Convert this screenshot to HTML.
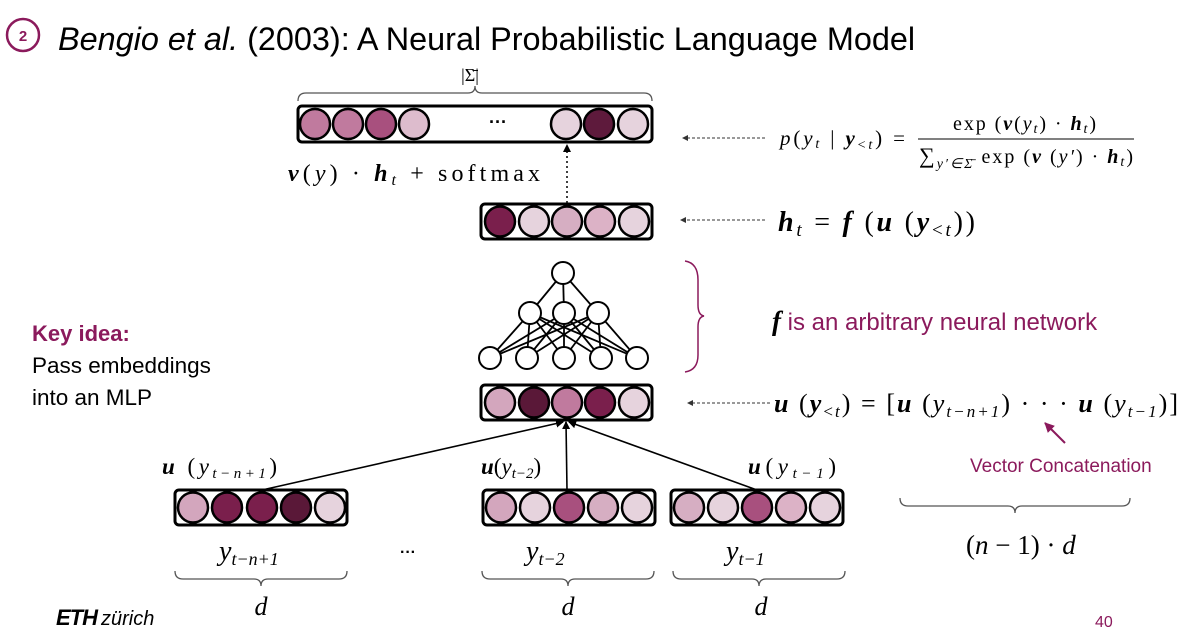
<!DOCTYPE html>
<html><head><meta charset="utf-8"><style>
html,body{margin:0;padding:0;background:#fff;}
svg{display:block;}
.s{font-family:"Liberation Sans",sans-serif;}
.m{font-family:"Liberation Serif",serif;font-style:italic;}
.r{font-family:"Liberation Serif",serif;}
.b{font-family:"Liberation Serif",serif;font-style:italic;font-weight:bold;}
</style></head><body>
<svg width="1182" height="637" viewBox="0 0 1182 637" xmlns="http://www.w3.org/2000/svg">
<defs>
<marker id="ar" markerWidth="8" markerHeight="8" refX="7" refY="4" orient="auto" markerUnits="userSpaceOnUse"><path d="M0,0 L8,4 L0,8 z" fill="#000"/></marker>
<marker id="ar2" markerWidth="6" markerHeight="6" refX="5" refY="3" orient="auto" markerUnits="userSpaceOnUse"><path d="M0,0 L6,3 L0,6 z" fill="#333"/></marker>
<marker id="ar3" markerWidth="10" markerHeight="10" refX="9" refY="5" orient="auto" markerUnits="userSpaceOnUse"><path d="M0,0 L10,5 L0,10 z" fill="#8b1a5c"/></marker>
</defs>
<circle cx="23" cy="35" r="16" fill="none" stroke="#8b1a5c" stroke-width="2.5"/>
<text x="23" y="41" class="s" font-size="15" font-weight="bold" fill="#8b1a5c" text-anchor="middle">2</text>
<text x="58" y="50" class="s" font-size="32.4" fill="#000"><tspan font-style="italic">Bengio et al.</tspan> (2003): A Neural Probabilistic Language Model</text>

<text x="470" y="81" class="r" font-size="18" text-anchor="middle">|Σ̄|</text>
<path d="M298,101 Q298,93 306,93 L468,93 Q475,93 475,86 Q475,93 482,93 L644,93 Q652,93 652,101" fill="none" stroke="#555" stroke-width="1.3"/>

<rect x="298" y="106" width="354" height="36" rx="4" fill="#fff" stroke="#000" stroke-width="3"/>
<g stroke="#000" stroke-width="2.5">
<circle cx="315" cy="124" r="15" fill="#c07a9e"/>
<circle cx="348" cy="124" r="15" fill="#c07a9e"/>
<circle cx="381" cy="124" r="15" fill="#a8507e"/>
<circle cx="414" cy="124" r="15" fill="#ddbccd"/>
<circle cx="566" cy="124" r="15" fill="#e6d3dd"/>
<circle cx="599" cy="124" r="15" fill="#5e1a3c"/>
<circle cx="633" cy="124" r="15" fill="#e6d3dd"/>
</g>
<text x="498" y="128" class="s" font-size="18" font-weight="bold" text-anchor="middle">···</text>

<text x="288" y="181" font-size="24" textLength="252" lengthAdjust="spacing"><tspan class="b">v</tspan><tspan class="r">(</tspan><tspan class="m">y</tspan><tspan class="r">) · </tspan><tspan class="b">h</tspan><tspan class="m" font-size="16" dy="4">t</tspan><tspan class="r" dy="-4">    +    softmax</tspan></text>

<line x1="567" y1="203" x2="567" y2="145" stroke="#000" stroke-width="1.5" stroke-dasharray="2,3" marker-end="url(#ar)"/>

<rect x="481" y="204" width="171" height="35" rx="4" fill="#fff" stroke="#000" stroke-width="3"/>
<g stroke="#000" stroke-width="2.5">
<circle cx="500" cy="221.5" r="15" fill="#7a1f4c"/>
<circle cx="534" cy="221.5" r="15" fill="#e6d3dd"/>
<circle cx="567" cy="221.5" r="15" fill="#d6aec2"/>
<circle cx="600" cy="221.5" r="15" fill="#dcb2c6"/>
<circle cx="634" cy="221.5" r="15" fill="#e6d3dd"/>
</g>

<g stroke="#000" stroke-width="1.8" fill="none">
<line x1="563" y1="273" x2="530" y2="313"/><line x1="563" y1="273" x2="564" y2="313"/><line x1="563" y1="273" x2="598" y2="313"/>
<line x1="530" y1="313" x2="490" y2="358"/><line x1="530" y1="313" x2="527" y2="358"/><line x1="530" y1="313" x2="564" y2="358"/><line x1="530" y1="313" x2="601" y2="358"/><line x1="530" y1="313" x2="637" y2="358"/>
<line x1="564" y1="313" x2="490" y2="358"/><line x1="564" y1="313" x2="527" y2="358"/><line x1="564" y1="313" x2="564" y2="358"/><line x1="564" y1="313" x2="601" y2="358"/><line x1="564" y1="313" x2="637" y2="358"/>
<line x1="598" y1="313" x2="490" y2="358"/><line x1="598" y1="313" x2="527" y2="358"/><line x1="598" y1="313" x2="564" y2="358"/><line x1="598" y1="313" x2="601" y2="358"/><line x1="598" y1="313" x2="637" y2="358"/>
</g>
<g stroke="#000" stroke-width="2" fill="#fff">
<circle cx="563" cy="273" r="11"/>
<circle cx="530" cy="313" r="11"/><circle cx="564" cy="313" r="11"/><circle cx="598" cy="313" r="11"/>
<circle cx="490" cy="358" r="11"/><circle cx="527" cy="358" r="11"/><circle cx="564" cy="358" r="11"/><circle cx="601" cy="358" r="11"/><circle cx="637" cy="358" r="11"/>
</g>

<rect x="481" y="385" width="171" height="35" rx="4" fill="#fff" stroke="#000" stroke-width="3"/>
<g stroke="#000" stroke-width="2.5">
<circle cx="500" cy="402.5" r="15" fill="#d3a6bd"/>
<circle cx="534" cy="402.5" r="15" fill="#5a1838"/>
<circle cx="567" cy="402.5" r="15" fill="#c07a9e"/>
<circle cx="600" cy="402.5" r="15" fill="#7a1f4c"/>
<circle cx="634" cy="402.5" r="15" fill="#e6d3dd"/>
</g>

<g stroke="#000" stroke-width="1.6">
<line x1="262" y1="490" x2="563" y2="422" marker-end="url(#ar)"/>
<line x1="567" y1="490" x2="566" y2="422" marker-end="url(#ar)"/>
<line x1="757" y1="490" x2="569" y2="422" marker-end="url(#ar)"/>
</g>

<rect x="175" y="490" width="172" height="35" rx="4" fill="#fff" stroke="#000" stroke-width="3"/>
<g stroke="#000" stroke-width="2.5">
<circle cx="193" cy="507.5" r="15" fill="#d3a6bd"/>
<circle cx="227" cy="507.5" r="15" fill="#7a1f4c"/>
<circle cx="262" cy="507.5" r="15" fill="#7a1f4c"/>
<circle cx="296" cy="507.5" r="15" fill="#5a1838"/>
<circle cx="330" cy="507.5" r="15" fill="#e6d3dd"/>
</g>
<rect x="483" y="490" width="172" height="35" rx="4" fill="#fff" stroke="#000" stroke-width="3"/>
<g stroke="#000" stroke-width="2.5">
<circle cx="501" cy="507.5" r="15" fill="#d3a6bd"/>
<circle cx="535" cy="507.5" r="15" fill="#e6d3dd"/>
<circle cx="569" cy="507.5" r="15" fill="#a8507e"/>
<circle cx="603" cy="507.5" r="15" fill="#d6aec2"/>
<circle cx="637" cy="507.5" r="15" fill="#e6d3dd"/>
</g>
<rect x="671" y="490" width="172" height="35" rx="4" fill="#fff" stroke="#000" stroke-width="3"/>
<g stroke="#000" stroke-width="2.5">
<circle cx="689" cy="507.5" r="15" fill="#d6aec2"/>
<circle cx="723" cy="507.5" r="15" fill="#e6d3dd"/>
<circle cx="757" cy="507.5" r="15" fill="#a8507e"/>
<circle cx="791" cy="507.5" r="15" fill="#dcb2c6"/>
<circle cx="825" cy="507.5" r="15" fill="#e6d3dd"/>
</g>

<text x="162" y="474" font-size="23" textLength="115" lengthAdjust="spacing"><tspan class="b">u</tspan><tspan class="r"> (</tspan><tspan class="m">y</tspan><tspan class="m" font-size="15" dy="4">t−n+1</tspan><tspan class="r" dy="-4">)</tspan></text>
<text x="481" y="474" font-size="23"><tspan class="b">u</tspan><tspan class="r">(</tspan><tspan class="m">y</tspan><tspan class="m" font-size="15" dy="4">t−2</tspan><tspan class="r" dy="-4">)</tspan></text>
<text x="748" y="474" font-size="23" textLength="88" lengthAdjust="spacing"><tspan class="b">u</tspan><tspan class="r">(</tspan><tspan class="m">y</tspan><tspan class="m" font-size="15" dy="4">t−1</tspan><tspan class="r" dy="-4">)</tspan></text>

<text x="219" y="560" font-size="28"><tspan class="m">y</tspan><tspan class="m" font-size="18" dy="5">t−n+1</tspan></text>
<text x="408" y="557" class="s" font-size="16" font-weight="bold" text-anchor="middle">···</text>
<text x="526" y="560" font-size="28"><tspan class="m">y</tspan><tspan class="m" font-size="18" dy="5">t−2</tspan></text>
<text x="726" y="560" font-size="28"><tspan class="m">y</tspan><tspan class="m" font-size="18" dy="5">t−1</tspan></text>

<g fill="none" stroke="#555" stroke-width="1.3">
<path d="M175,571 Q175,579 183,579 L254,579 Q261,579 261,586 Q261,579 268,579 L339,579 Q347,579 347,571"/>
<path d="M482,571 Q482,579 490,579 L561,579 Q568,579 568,586 Q568,579 575,579 L646,579 Q654,579 654,571"/>
<path d="M673,571 Q673,579 681,579 L752,579 Q759,579 759,586 Q759,579 766,579 L837,579 Q845,579 845,571"/>
<path d="M900,498 Q900,506 908,506 L1008,506 Q1015,506 1015,513 Q1015,506 1022,506 L1122,506 Q1130,506 1130,498"/>
</g>
<text x="261" y="615" class="m" font-size="26" text-anchor="middle">d</text>
<text x="568" y="615" class="m" font-size="26" text-anchor="middle">d</text>
<text x="761" y="615" class="m" font-size="26" text-anchor="middle">d</text>
<text x="966" y="554" font-size="27"><tspan class="r">(</tspan><tspan class="m">n</tspan><tspan class="r"> − 1) · </tspan><tspan class="m">d</tspan></text>

<g stroke="#333" stroke-width="1" stroke-dasharray="3,2">
<line x1="765" y1="138" x2="683" y2="138" marker-end="url(#ar2)"/>
<line x1="765" y1="220" x2="681" y2="220" marker-end="url(#ar2)"/>
<line x1="770" y1="403" x2="688" y2="403" marker-end="url(#ar2)"/>
</g>
<text x="780" y="145" font-size="21" textLength="125" lengthAdjust="spacing"><tspan class="m">p</tspan><tspan class="r">(</tspan><tspan class="m">y</tspan><tspan class="m" font-size="14" dy="3">t</tspan><tspan class="r" dy="-3">  |  </tspan><tspan class="b">y</tspan><tspan class="r" font-size="14" dy="4">&lt;</tspan><tspan class="m" font-size="14">t</tspan><tspan class="r" dy="-4">) =</tspan></text>
<line x1="918" y1="139" x2="1134" y2="139" stroke="#000" stroke-width="1"/>
<text x="953" y="130" font-size="20" textLength="143" lengthAdjust="spacing"><tspan class="r">exp (</tspan><tspan class="b">v</tspan><tspan class="r">(</tspan><tspan class="m">y</tspan><tspan class="m" font-size="14" dy="3">t</tspan><tspan class="r" dy="-3">) · </tspan><tspan class="b">h</tspan><tspan class="m" font-size="14" dy="3">t</tspan><tspan class="r" dy="-3">)</tspan></text>
<text x="919" y="163" font-size="20" textLength="214" lengthAdjust="spacing"><tspan class="r" font-size="22">∑</tspan><tspan class="m" font-size="14" dy="5">y′∈Σ̄</tspan><tspan class="r" dy="-5"> exp (</tspan><tspan class="b">v</tspan><tspan class="r"> (</tspan><tspan class="m">y′</tspan><tspan class="r">) · </tspan><tspan class="b">h</tspan><tspan class="m" font-size="14" dy="3">t</tspan><tspan class="r" dy="-3">)</tspan></text>

<text x="778" y="231" font-size="28" textLength="197" lengthAdjust="spacing"><tspan class="b">h</tspan><tspan class="m" font-size="19" dy="5">t</tspan><tspan class="r" dy="-5"> = </tspan><tspan class="b">f</tspan><tspan class="r"> (</tspan><tspan class="b">u</tspan><tspan class="r"> (</tspan><tspan class="b">y</tspan><tspan class="r" font-size="19" dy="5">&lt;</tspan><tspan class="m" font-size="19">t</tspan><tspan class="r" dy="-5">))</tspan></text>

<path d="M685,261 Q698,263 698,280 L698,305 Q698,315 704,316 Q698,317 698,327 L698,355 Q698,370 685,372" fill="none" stroke="#8b1a5c" stroke-width="1.5"/>
<text x="772" y="330" font-size="24"><tspan class="b" font-size="27">f</tspan><tspan class="s" fill="#8b1a5c"> is an arbitrary neural network</tspan></text>

<text x="774" y="412" font-size="26" textLength="404" lengthAdjust="spacing"><tspan class="b">u</tspan><tspan class="r"> (</tspan><tspan class="b">y</tspan><tspan class="r" font-size="17" dy="5">&lt;</tspan><tspan class="m" font-size="17">t</tspan><tspan class="r" dy="-5">) = [</tspan><tspan class="b">u</tspan><tspan class="r"> (</tspan><tspan class="m">y</tspan><tspan class="m" font-size="17" dy="5">t−n+1</tspan><tspan class="r" dy="-5">) · · · </tspan><tspan class="b">u</tspan><tspan class="r"> (</tspan><tspan class="m">y</tspan><tspan class="m" font-size="17" dy="5">t−1</tspan><tspan class="r" dy="-5">)]</tspan></text>
<line x1="1065" y1="443" x2="1045" y2="423" stroke="#8b1a5c" stroke-width="2" marker-end="url(#ar3)"/>
<text x="970" y="472" class="s" font-size="19" fill="#8b1a5c">Vector Concatenation</text>

<text x="32" y="341" class="s" font-size="22" font-weight="bold" fill="#8b1a5c">Key idea:</text>
<text x="32" y="373" class="s" font-size="22.5">Pass embeddings</text>
<text x="32" y="405" class="s" font-size="22.5">into an MLP</text>

<text x="56" y="625" class="s" font-size="22" font-weight="bold" font-style="italic" letter-spacing="-1">ETH</text>
<text x="101" y="625" class="s" font-size="20" font-style="italic">zürich</text>
<text x="1095" y="627" class="s" font-size="16" fill="#8b1a5c">40</text>
</svg>
</body></html>
